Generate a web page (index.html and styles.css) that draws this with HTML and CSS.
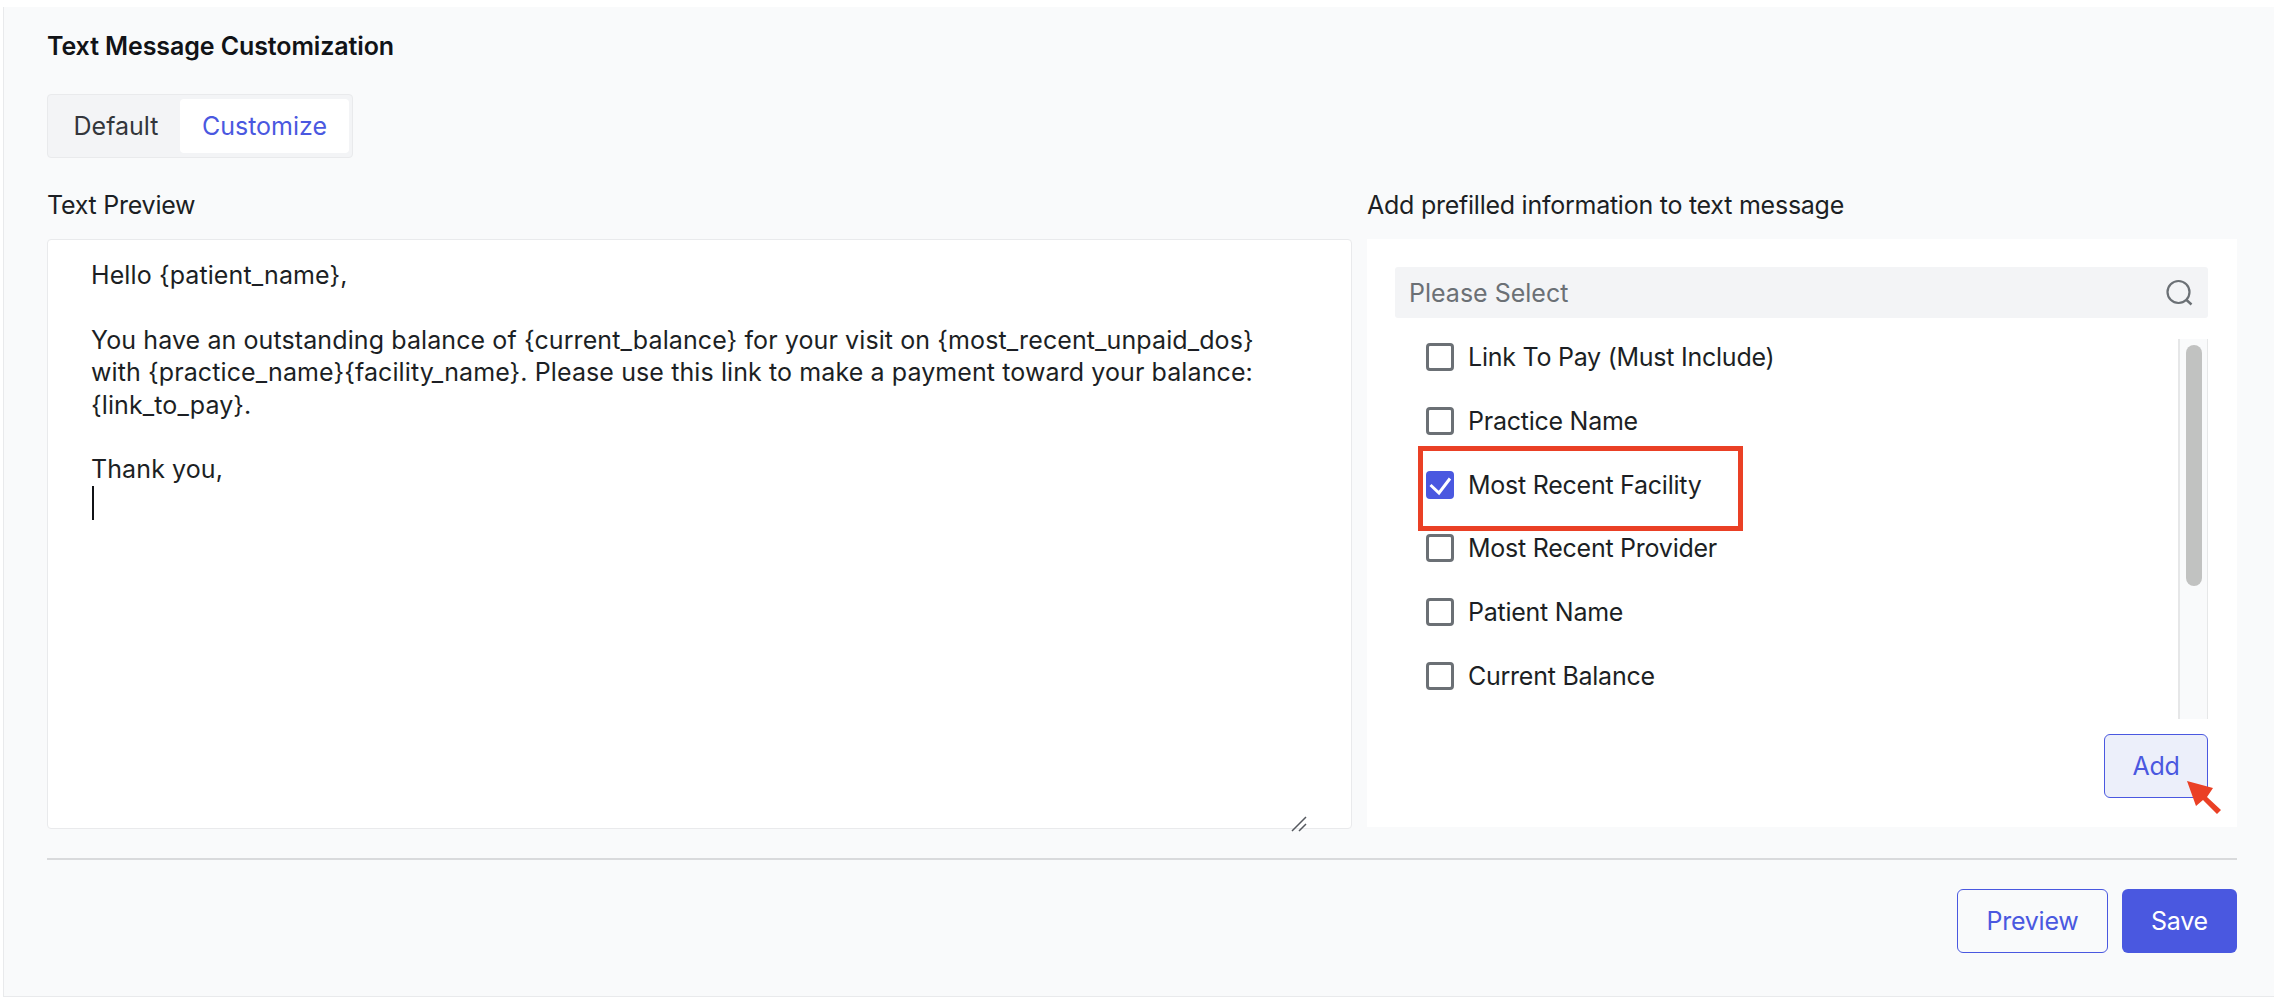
FILE: index.html
```html
<!DOCTYPE html>
<html lang="en">
  <head>
    <meta charset="UTF-8" />
    <title>Text Message Customization</title>
    <link rel="stylesheet" href="styles.css">
  </head>
  <body>
    <div class="panel">
      <h1>Text Message Customization</h1>

      <div class="tabs">
        <button class="tab">Default</button>
        <button class="tab active">Customize</button>
      </div>

      <div class="columns">
        <div class="preview-col">
          <div class="label">Text Preview</div>
          <div class="preview-box">
            <p>Hello {patient_name},</p>
            <p>You have an outstanding balance of {current_balance} for your visit on {most_recent_unpaid_dos}<br>with {practice_name}{facility_name}. Please use this link to make a payment toward your balance:<br>{link_to_pay}.</p>
            <p>Thank you,<br><span class="caret"></span></p>
            <svg class="resize-handle" width="16" height="16" viewBox="0 0 16 16">
              <path d="M1 15L15 1M8 15L15 8" fill="none" stroke="#55585f" stroke-width="1.500"/>
            </svg>
          </div>
        </div>

        <div class="info-col">
          <div class="label">Add prefilled information to text message</div>
          <div class="info-box">
            <div class="search">
              <span>Please Select</span>
              <svg width="28" height="28" viewBox="0 0 28 28">
                <circle cx="13.500" cy="13" r="11" fill="none" stroke="#6b7075" stroke-width="2.200"/>
                <path d="M21.500 21L26.500 25.500" stroke="#6b7075" stroke-width="2.400"/>
              </svg>
            </div>

            <div class="list-wrap">
              <ul class="options">
                <li><span class="check"></span>Link To Pay (Must Include)</li>
                <li><span class="check"></span>Practice Name</li>
                <li>
                  <span class="check checked">
                    <svg width="28" height="28" viewBox="0 0 28 28">
                      <path d="M4.500 14L13 22L24 7.500" fill="none" stroke="#fff" stroke-width="3"/>
                    </svg>
                  </span>
                  Most Recent Facility
                </li>
                <li><span class="check"></span>Most Recent Provider</li>
                <li><span class="check"></span>Patient Name</li>
                <li><span class="check"></span>Current Balance</li>
              </ul>
              <div class="scrollbar"><div class="thumb"></div></div>
              <div class="highlight"></div>
            </div>

            <div class="add-row">
              <button class="btn add">Add</button>
              <svg class="arrow" width="36" height="36" viewBox="0 0 36 36">
                <path d="M0 0L26 7L20 16L34 29L30 33L16 19L9 25Z" fill="#ea4025"/>
              </svg>
            </div>
          </div>
        </div>
      </div>

      <div class="footer">
        <button class="btn outline">Preview</button>
        <button class="btn primary">Save</button>
      </div>
    </div>
  </body>
</html>
```

FILE: styles.css
```css
* {
  box-sizing: border-box;
}

html, body {
  margin: 0;
  background: #ffffff;
}

body {
  padding: 7px 0 3px 3px;
  font-family: Inter, "Noto Sans", sans-serif;
  font-size: 25px;
  letter-spacing: -0.25px;
  color: #1c1f24;
}

.panel {
  width: 2271px;
  height: 990px;
  padding: 24px 37px 0 43px;
  background-color: #f9fafb;
  border-left: 1px solid #e9eaec;
  border-bottom: 1px solid #e9eaec;
}

h1 {
  margin: 0;
  font-size: 25px;
  line-height: 30px;
  font-weight: 600;
  color: #111317;
  letter-spacing: -0.1px;
}

.tabs {
  display: inline-flex;
  margin-top: 33px;
  padding: 4px 3px 4px 4px;
  height: 64px;
  background: #f3f4f6;
  border: 1px solid #e9eaec;
  border-radius: 4px;
  vertical-align: top;
}

.tab {
  border: none;
  background: none;
  font: inherit;
  letter-spacing: 0;
  color: #33363b;
  padding: 0;
}

.tab:first-child {
  width: 128px;
}

.tab.active {
  width: 169px;
  background: #ffffff;
  color: #4a58e0;
  border-radius: 4px;
}

.columns {
  display: flex;
  gap: 15px;
  margin-top: 15px;
}

.preview-col {
  width: 1305px;
}

.info-col {
  width: 870px;
}

.label {
  line-height: 33px;
  height: 66px;
  padding-top: 16px;
}

.preview-box {
  position: relative;
  height: 590px;
  padding: 19px 43px;
  background: #ffffff;
  border: 1px solid #e9eaec;
  border-radius: 4px;
  line-height: 32.4px;
  letter-spacing: 0.1px;
  white-space: nowrap;
}

.preview-box p {
  margin: 0 0 32.4px;
}

.caret {
  display: inline-block;
  width: 2px;
  height: 34px;
  margin-left: 1px;
  background: #111317;
  vertical-align: top;
}

.resize-handle {
  position: absolute;
  right: 44px;
  bottom: -4px;
}

.info-box {
  height: 588px;
  padding: 28px 29px 0 28px;
  background: #ffffff;
}

.search {
  display: flex;
  justify-content: space-between;
  align-items: center;
  height: 51px;
  padding: 0 15px 0 14px;
  background: #f3f4f6;
  border-radius: 3px;
  letter-spacing: 0;
  color: #6b7075;
}

.list-wrap {
  position: relative;
  display: flex;
  justify-content: space-between;
  height: 380px;
  margin-top: 21px;
}

.options {
  list-style: none;
  margin: 0;
  padding: 0 0 0 31px;
}

.options li {
  display: flex;
  align-items: center;
  gap: 14px;
  height: 36px;
}

.options li + li {
  margin-top: 27.8px;
}

.check {
  flex: none;
  width: 28px;
  height: 28px;
  background: #ffffff;
  border: 3px solid #6b7075;
  border-radius: 4px;
}

.check.checked {
  background: #4a58e0;
  border: none;
}

.scrollbar {
  width: 30px;
  height: 380px;
  padding: 6px 6px 0 6px;
  background: #f9fafb;
  border-left: 2px solid #e6e7e8;
  border-right: 1px solid #e6e7e8;
}

.thumb {
  width: 16px;
  height: 241px;
  background: #c1c2c1;
  border-radius: 8px;
}

.highlight {
  position: absolute;
  left: 23px;
  top: 107px;
  width: 325px;
  height: 85px;
  border: 5px solid #ea4025;
}

.add-row {
  position: relative;
  display: flex;
  justify-content: flex-end;
  margin-top: 15px;
}

.btn {
  height: 64px;
  padding: 0;
  font: inherit;
  letter-spacing: inherit;
  border-radius: 6px;
}

.add {
  width: 104px;
  background: #eceffa;
  border: 1.5px solid #4a58e0;
  color: #4a58e0;
}

.arrow {
  position: absolute;
  right: -15px;
  top: 47px;
}

.footer {
  display: flex;
  justify-content: flex-end;
  gap: 14px;
  margin-top: 29px;
  padding-top: 29px;
  border-top: 2px solid #d9dadc;
}

.outline {
  width: 151px;
  background: none;
  border: 1.5px solid #4a58e0;
  color: #4a58e0;
}

.primary {
  width: 115px;
  background: #4a58e0;
  border: none;
  color: #ffffff;
}
```
